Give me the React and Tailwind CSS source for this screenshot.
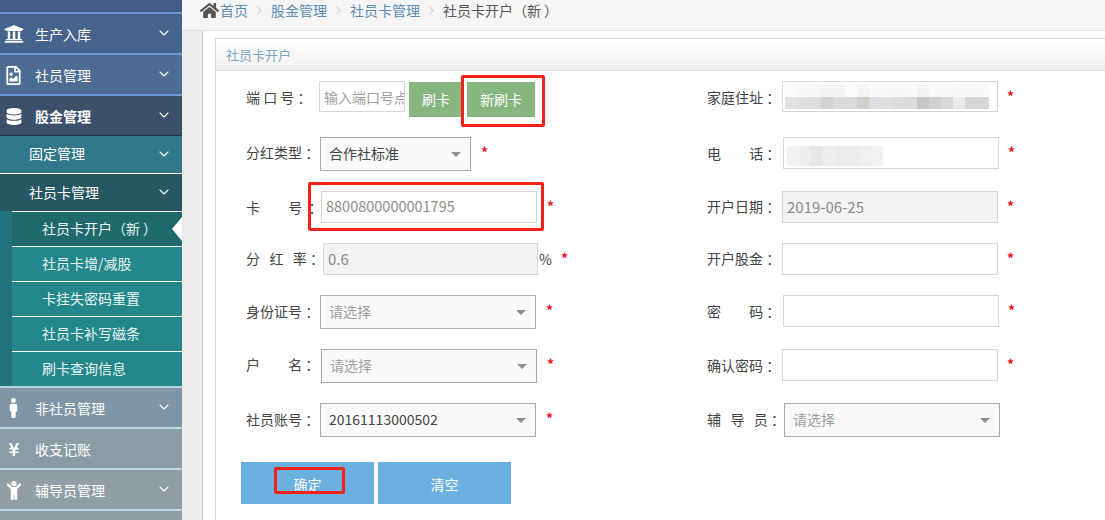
import React from 'react';
import { FaUniversity, FaRegFileImage, FaDatabase, FaMale, FaYenSign, FaChild, FaHome } from 'react-icons/fa';
import { ChevronDown, ChevronRight } from 'lucide-react';

const topItems = [
    { label: '生产入库', icon: FaUniversity, cls: 'bg-[#46638c]', iconCls: 'w-[24px] h-[20px]' },
    { label: '社员管理', icon: FaRegFileImage, cls: 'bg-[#4c6c94]', iconCls: 'w-[17px] h-[19px]' },
];

const subLinks = ['社员卡增/减股', '卡挂失密码重置', '社员卡补写磁条', '刷卡查询信息'];

const bottomItems = [
    { label: '非社员管理', icon: FaMale, cls: 'bg-[#7f95a5]', iconCls: 'w-[19px] h-[20px]', arrow: true },
    { label: '收支记账', icon: FaYenSign, cls: 'bg-[#8a9ca6]', iconCls: 'w-[14px] h-[15px]', arrow: false },
    { label: '辅导员管理', icon: FaChild, cls: 'bg-[#919ea4]', iconCls: 'w-[16px] h-[19px]', arrow: true },
];

const Star = ({ className }) => (
    <span className={`text-[#f0141e] text-[14px] font-bold leading-none ${className}`}>*</span>
);

const Arrow = () => (
    <ChevronDown className="absolute right-[10px] top-1/2 -translate-y-[9px] w-[16px] h-[16px] text-white" strokeWidth={1.6} />
);

// centred fullwidth brackets, like the original font draws them
const NewTag = () => (
    <>
        <span className="font-['Noto_Sans_CJK_TC']">（</span>新<span className="ml-[3px] font-['Noto_Sans_CJK_TC']">）</span>
    </>
);

const MenuItem = ({ item, lineCls }) => {
    const Icon = item.icon;
    return (
        <div className={`relative h-[41px] pt-[1px] border-b-2 ${lineCls} ${item.cls} flex items-center rounded-r-[2px]`}>
            <span className="w-[35px] flex justify-center">
                <Icon className={`${item.iconCls} text-white -translate-x-[4px]`} />
            </span>
            <span className="text-[14px] text-white">{item.label}</span>
            {item.arrow !== false && <Arrow />}
        </div>
    );
};

const Sidebar = () => (
    <aside className="w-[182px] h-[520px] shrink-0 overflow-hidden bg-[#929fa5]">
        <div className="h-[14px] bg-[#415d86] border-b-2 border-[#6793cf]"></div>
        {topItems.map((item) => <MenuItem key={item.label} item={item} lineCls="border-[#6b98d2]" />)}
        <div className="relative h-[40px] pt-[1px] bg-[#3d506b] border-b border-[#263444] flex items-center">
            <span className="w-[35px] flex justify-center">
                <FaDatabase className="w-[16px] h-[17px] text-white -translate-x-[4px]" />
            </span>
            <span className="text-[14px] font-bold text-white">股金管理</span>
            <Arrow />
        </div>
        <div className="relative h-[38px] pb-[2px] bg-[#31778a] border-b border-white flex items-center pl-[29px]">
            <span className="text-[14px] text-white">固定管理</span>
            <Arrow />
        </div>
        <div className="relative h-[37px] bg-[#275762] flex items-center pl-[29px]">
            <span className="text-[14px] text-white">社员卡管理</span>
            <Arrow />
        </div>
        <div className="bg-[#21727a] pl-[12px]">
            <div className="relative h-[35px] pb-[1px] bg-[#1f686d] border-t border-white flex items-center pl-[30px]">
                <span className="text-[14px] text-[#e8f4f4]">社员卡开户<NewTag /></span>
                <span className="absolute right-0 top-[5px] w-0 h-0 border-y-[12px] border-y-transparent border-r-[10px] border-r-white"></span>
            </div>
            {subLinks.map((name) => (
                <div key={name} className="h-[35px] pb-[1px] bg-[#24878c] border-t border-white flex items-center pl-[30px]">
                    <span className="text-[14px] text-[#e8f4f4]">{name}</span>
                </div>
            ))}
        </div>
        <div className="h-[2px] bg-[#b4d2e8]"></div>
        {bottomItems.map((item) => <MenuItem key={item.label} item={item} lineCls="border-[#bdd8e6]" />)}
    </aside>
);

const Crumb = ({ children }) => (
    <>
        <span className="text-[#5b8db5]">{children}</span>
        <ChevronRight className="w-[13px] h-[13px] mx-[5px] text-[#b5b5b5]" strokeWidth={1.5} />
    </>
);

const Input = ({ className, value, disabled, children }) => (
    <div className={`border border-[#d5d5d5] flex items-center overflow-hidden ${disabled ? 'bg-[#f3f3f3]' : 'bg-white'} ${className}`}>
        {value && <span className={`pl-[4px] pb-[1px] leading-none text-[#8c8c8c] ${disabled ? 'text-[15px]' : 'text-[14.5px]'}`}>{value}</span>}
        {children}
    </div>
);

const Select = ({ className, value, placeholder }) => (
    <div className={`border border-[#aaaaaa] bg-[#fafafa] flex items-center justify-between pl-[8px] pr-[9px] ${className}`}>
        <span className={`text-[14px] pb-[2px] ${placeholder ? 'text-[#a0a0a0]' : 'text-[#444444]'}`}>{value || placeholder}</span>
        <span className="w-0 h-0 border-x-[5px] border-x-transparent border-t-[5px] border-t-[#8c8c8c]"></span>
    </div>
);

const Label = ({ children, className }) => (
    <span className={`shrink-0 text-[14px] leading-[20px] whitespace-pre text-[#444444] ${className}`}>{children}</span>
);

const addressTop = ['#fbfbfb', '#f8f8f8', '#f6f6f6', '#f4f4f4', '#f2f3f3', '#fbfbfb', '#f5f5f5', '#fafafa', '#f8f8f8', '#f8f8f8', '#f8f9f9', '#f2f3f3', '#fafafa', '#f9f9f9', '#f7f7f7', '#f6f7f7', '#f8f8f8'];
const addressBlocks = ['#e3e2e0', '#dfdfdd', '#dcdcda', '#d2d3d1', '#dadada', '#d9dad8', '#cfcfcb', '#dcdde0', '#dedfe1', '#dcdcda', '#dadbda', '#c6c7c4', '#cfd0d2', '#d8d8d5', '#e8e9e8', '#d5d5d3', '#d7d7d6'];
const phoneBlocks = ['#f1f1ef', '#ecedec', '#e6e7e7', '#eeeeee', '#ebebea', '#eaebea', '#edeff1', '#f1f2f4'];

const Form = () => (
    <div className="flex">
        {/* left column */}
        <div className="w-[466px] shrink-0 pl-[30px]">
            <div className="relative h-[56px] flex items-start">
                <Label className="w-[73px] mt-[6px]">{'端 口 号 ：'}</Label>
                <input
                    className="w-[86px] h-[31px] pl-[4px] border border-[#d5d5d5] bg-white text-[14px] placeholder:text-[#a0a0a0] outline-none"
                    placeholder="输入端口号点"
                    readOnly
                />
                <button className="ml-[4px] mt-[1px] w-[54px] h-[35px] bg-[#86b77f] text-[14px] text-white">刷卡</button>
                <button className="ml-[4px] mt-[1px] w-[68px] h-[35px] bg-[#86b77f] text-[14px] text-white">新刷卡</button>
                <div className="absolute left-[215px] top-[-6px] w-[84px] h-[52px] border-[3px] border-[#f5201a] rounded-[2px]"></div>
            </div>
            <div className="h-[54px] flex items-start">
                <Label className="w-[73px] mt-[5px]">{'分红类型 ：'}</Label>
                <Select className="ml-[1px] w-[151px] h-[34px]" value="合作社标准" />
                <Star className="ml-[10px] mt-[8px]" />
            </div>
            <div className="relative h-[52px] flex items-start">
                <Label className="relative z-10 w-[73px] mt-[6px]">{'卡         号  ：'}</Label>
                <Input className="ml-[2px] w-[216px] h-[32px]" value="8800800000001795" />
                <Star className="ml-[10px] mt-[8px]" />
                <div className="absolute left-[62px] top-[-9px] w-[236px] h-[49px] border-[3px] border-[#f5201a] rounded-[2px]"></div>
            </div>
            <div className="h-[52px] flex items-start">
                <Label className="w-[73px] mt-[5px]">{'分   红   率 ：'}</Label>
                <Input className="ml-[4px] w-[215px] h-[32px]" value="0.6" disabled />
                <span className="ml-[1px] mt-[6px] text-[14px] leading-[20px] text-[#444444]">%</span>
                <Star className="ml-[9px] mt-[8px]" />
            </div>
            <div className="h-[54px] flex items-start">
                <Label className="w-[73px] mt-[6px]">{'身份证号 ：'}</Label>
                <Select className="ml-[1px] w-[216px] h-[34px]" placeholder="请选择" />
                <Star className="ml-[10px] mt-[8px]" />
            </div>
            <div className="h-[54px] flex items-start">
                <Label className="w-[73px] mt-[5px]">{'户         名 ：'}</Label>
                <Select className="ml-[2px] w-[216px] h-[34px]" placeholder="请选择" />
                <Star className="ml-[10px] mt-[8px]" />
            </div>
            <div className="h-[59px] flex items-start">
                <Label className="w-[73px] mt-[6px]">{'社员账号 ：'}</Label>
                <Select className="ml-[1px] w-[216px] h-[34px]" value="20161113000502" />
                <Star className="ml-[10px] mt-[8px]" />
            </div>
            <div className="relative flex gap-[4px] -ml-[5px]">
                <button className="w-[133px] h-[42px] bg-[#6cb0df] text-[14px] text-white pt-[2px]">确定</button>
                <button className="w-[133px] h-[42px] bg-[#6cb0df] text-[14px] text-white pt-[2px]">清空</button>
                <div className="absolute left-[33px] top-[5px] w-[71px] h-[27px] border-[3px] border-[#f5201a] rounded-[2px]"></div>
            </div>
        </div>

        {/* right column */}
        <div className="flex-1 pl-[25px]">
            <div className="h-[56px] flex items-start">
                <Label className="w-[75px] mt-[6px]">{'家庭住址 ：'}</Label>
                <Input className="w-[216px] h-[31px] relative">
                    <div className="flex flex-col w-full pl-[2px]">
                        <div className="flex">
                            {addressTop.map((c, i) => (
                                <span key={i} className="w-[12px] h-[12px]" style={{ backgroundColor: c }}></span>
                            ))}
                        </div>
                        <div className="flex">
                            {addressBlocks.map((c, i) => (
                                <span key={i} className="w-[12px] h-[12px]" style={{ backgroundColor: c }}></span>
                            ))}
                        </div>
                    </div>
                </Input>
                <Star className="ml-[9px] mt-[8px]" />
            </div>
            <div className="h-[54px] flex items-start">
                <Label className="w-[76px] mt-[6px]">{'电         话 ：'}</Label>
                <Input className="w-[216px] h-[32px]">
                    <div className="flex pl-[3px] pt-[6px]">
                        {phoneBlocks.map((c, i) => (
                            <span key={i} className="w-[12px] h-[20px]" style={{ backgroundColor: c }}></span>
                        ))}
                    </div>
                </Input>
                <Star className="ml-[9px] mt-[8px]" />
            </div>
            <div className="h-[52px] flex items-start">
                <Label className="w-[75px] mt-[5px]">{'开户日期 ：'}</Label>
                <Input className="w-[216px] h-[32px]" value="2019-06-25" disabled />
                <Star className="ml-[9px] mt-[8px]" />
            </div>
            <div className="h-[52px] flex items-start">
                <Label className="w-[75px] mt-[5px]">{'开户股金 ：'}</Label>
                <Input className="w-[216px] h-[32px]" />
                <Star className="ml-[9px] mt-[8px]" />
            </div>
            <div className="h-[54px] flex items-start">
                <Label className="w-[76px] mt-[6px]">{'密         码 ：'}</Label>
                <Input className="w-[216px] h-[32px]" />
                <Star className="ml-[9px] mt-[8px]" />
            </div>
            <div className="h-[54px] flex items-start">
                <Label className="w-[75px] mt-[6px]">{'确认密码 ：'}</Label>
                <Input className="w-[216px] h-[32px]" />
                <Star className="ml-[9px] mt-[8px]" />
            </div>
            <div className="h-[59px] flex items-start">
                <Label className="w-[77px] mt-[6px]">{'辅   导   员 ：'}</Label>
                <Select className="w-[216px] h-[34px]" placeholder="请选择" />
            </div>
        </div>
    </div>
);

const App = () => (
    <div className="flex w-[1105px] h-[520px] overflow-hidden bg-white font-['Noto_Sans_CJK_SC','Noto_Sans',sans-serif]">
        <Sidebar />
        <main className="flex-1 min-w-0 flex flex-col">
            <div className="h-[31px] shrink-0 bg-[#f6f6f6] border-b border-[#e2e2e2] flex items-center pl-[18px] pb-[10px] text-[14px] whitespace-nowrap">
                <FaHome className="w-[19px] h-[17px] mr-[1px] text-[#555555]" />
                <Crumb>首页</Crumb>
                <Crumb>股金管理</Crumb>
                <Crumb>社员卡管理</Crumb>
                <span className="text-[#555555]">社员卡开户<NewTag /></span>
            </div>
            <div className="flex flex-1 min-h-0">
                <div className="w-[21px] shrink-0 bg-[#ececec] border-r border-[#c5d3e0]"></div>
                <div className="flex-1 min-w-0 pl-[12px] pt-[7px]">
                    <div className="border-l border-t border-[#d8d8d8] h-full">
                        <div className="h-[32px] bg-gradient-to-b from-white to-[#f1f1f1] border-b border-[#dddddd] flex items-center pl-[10px]">
                            <span className="text-[13px] text-[#7aa7c9]">社员卡开户</span>
                        </div>
                        <div className="pt-[10px]">
                            <Form />
                        </div>
                    </div>
                </div>
            </div>
        </main>
    </div>
);

export default App;
